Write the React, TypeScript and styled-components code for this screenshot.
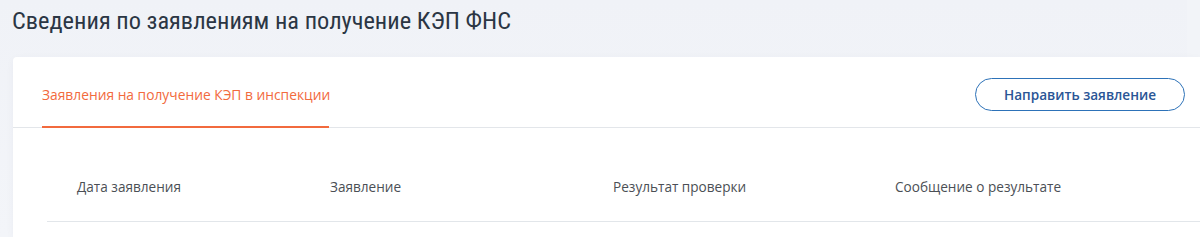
import React from 'react';
import styled, { createGlobalStyle } from 'styled-components';

const GlobalStyle = createGlobalStyle`
  html, body {
    margin: 0;
    padding: 0;
    background: #f2f4f8;
    overflow: hidden;
  }
  body {
    font-family: 'Open Sans', 'Noto Sans', sans-serif;
  }
`;

const columns = [
  'Дата заявления',
  'Заявление',
  'Результат проверки',
  'Сообщение о результате'
];

function App() {
  return (
    <>
      <GlobalStyle />
      <Page>
        <Title>Сведения по заявлениям на получение КЭП ФНС</Title>
        <Card>
          <CardHead>
            <Tab active>Заявления на получение КЭП в инспекции</Tab>
            <OutlineButton type="button">Направить заявление</OutlineButton>
          </CardHead>
          <Table>
            <HeadRow>
              {columns.map((c) => (
                <HeadCell key={c}>{c}</HeadCell>
              ))}
            </HeadRow>
          </Table>
        </Card>
      </Page>
    </>
  );
}

export default App;

const Page = styled.div`
  padding: 4px 0 0 13px;
  width: 1187px;
  box-sizing: border-box;
  background: linear-gradient(180deg, #f0f2f7 0%, #f3f5f9 100%);
  min-height: 237px;
`;

const Title = styled.h1`
  margin: 0 0 19px -1px;
  font-family: 'Roboto Condensed', 'DejaVu Sans Condensed', 'Roboto', sans-serif;
  font-stretch: condensed;
  font-weight: 400;
  font-size: 24.4px;
  line-height: 34px;
  color: #2b3644;
`;

const Card = styled.div`
  background: #fff;
  border-radius: 4px 0 0 0;
  margin-right: -13px;
  box-shadow: 0 2px 8px rgba(40, 60, 90, 0.04);
  min-height: 180px;
`;

const CardHead = styled.div`
  display: flex;
  align-items: stretch;
  justify-content: space-between;
  height: 71px;
  padding: 0 15px 0 29px;
  border-bottom: 1px solid #e3e6ea;
  box-sizing: border-box;
`;

const Tab = styled.div<{ active?: boolean }>`
  display: flex;
  align-items: center;
  padding-top: 6px;
  margin-bottom: -1px;
  font-size: 13.8px;
  white-space: nowrap;
  color: ${(p) => (p.active ? '#f26a3d' : '#4a4a4a')};
  border-bottom: 2px solid ${(p) => (p.active ? '#f26a3d' : 'transparent')};
  box-sizing: border-box;
  width: 287px;
`;

const OutlineButton = styled.button`
  align-self: center;
  margin-top: 4px;
  width: 210px;
  height: 33px;
  border: 1px solid #2d72b8;
  border-radius: 17px;
  background: #fff;
  color: #2a5596;
  font-family: 'Open Sans', 'Noto Sans', sans-serif;
  font-size: 13.6px;
  font-weight: 600;
  cursor: pointer;
`;

const Table = styled.div`
  padding: 0 0 0 34px;
`;

const HeadRow = styled.div`
  display: grid;
  grid-template-columns: 253px 283px 282px 1fr;
  height: 94px;
  align-items: end;
  border-bottom: 1px solid #e2e6ea;
  box-sizing: border-box;
`;

const HeadCell = styled.div`
  padding: 0 0 24px 30px;
  font-size: 13.6px;
  line-height: 20px;
  color: #4b4f55;
`;
